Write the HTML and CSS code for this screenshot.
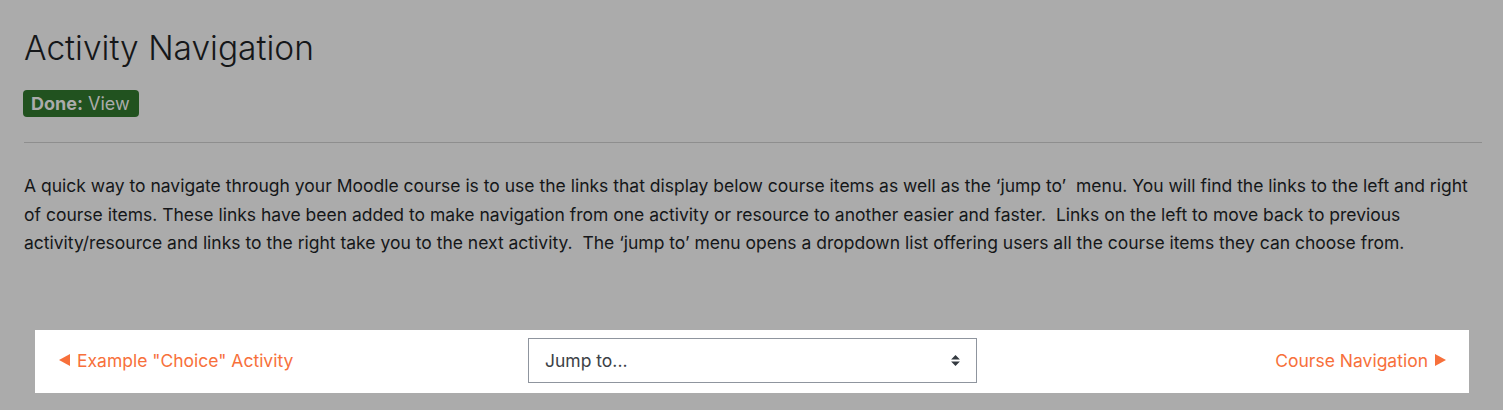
FILE: index.html
```html
<!DOCTYPE html>
<html>

<head>
  <meta charset="UTF-8">
  <title>Activity Navigation</title>
  <link rel="stylesheet" href="styles.css">
</head>

<body>
<div class="page">
  <h2 class="title">Activity Navigation</h2>
  <div class="completion">
    <span class="badge"><strong>Done:</strong> View</span>
  </div>
  <hr class="rule">
  <p class="intro">A quick way to navigate through your Moodle course is to use the links that display below course items as well as the &lsquo;jump to&rsquo;&nbsp; menu. You will find the links to the left and right<br>of course items. These links have been added to make navigation from one activity or resource to another easier and faster.&nbsp; Links on the left to move back to previous<br>activity/resource and links to the right take you to the next activity.&nbsp; The &lsquo;jump to&rsquo; menu opens a dropdown list offering users all the course items they can choose from.</p>

  <div class="activity-nav">
    <a class="prev" href="#">
      <svg class="arrow" width="11" height="12" viewBox="0 0 11 12"><path d="M0 6L11 0v12z"/></svg>
      Example "Choice" Activity
    </a>
    <div class="jump">
      <select class="jump-select">
        <option>Jump to...</option>
        <option>Example "Choice" Activity</option>
        <option>Course Navigation</option>
      </select>
    </div>
    <a class="next" href="#">
      Course Navigation
      <svg class="arrow" width="11" height="12" viewBox="0 0 11 12"><path d="M11 6L0 0v12z"/></svg>
    </a>
  </div>
</div>
</body>

</html>
```

FILE: styles.css
```css
body {
  margin: 0;
  background: #ababab;
  color: #151719;
  font-family: Inter, "Noto Sans", sans-serif;
}

.page {
  padding: 26px 21px 0 24px;
}

.title {
  margin: 0;
  font-size: 33.5px;
  font-weight: 300;
  line-height: 44px;
}

.completion {
  margin-top: 20px;
  height: 27px;
}
.badge {
  display: inline-block;
  height: 27px;
  line-height: 27px;
  margin-left: -1px;
  padding: 0 9px 0 8px;
  border-radius: 4px;
  background: #21521f;
  color: #ababab;
  font-size: 18px;
}
.badge strong {
  font-weight: 700;
}

.rule {
  margin: 25px 0 0 0;
  border: none;
  border-top: 1px solid #8e8e8e;
}

.intro {
  margin: 29px 0 0 0;
  font-size: 17.5px;
  line-height: 28.5px;
  white-space: nowrap;
}

.activity-nav {
  display: grid;
  grid-template-columns: 1fr 449px 1fr;
  align-items: center;
  margin: 72px 13px 0 11px;
  padding: 8px 23px 10px 24px;
  background: #fff;
}

.prev, .next {
  color: #f7703b;
  text-decoration: none;
  font-size: 17.5px;
  display: flex;
  align-items: center;
  gap: 7px;
}
.next {
  justify-content: flex-end;
}
.arrow {
  fill: #f7703b;
}

.jump-select {
  display: block;
  width: 449px;
  height: 45px;
  padding: 0 30px 0 16px;
  border: 1px solid #8f959e;
  border-radius: 0;
  background: #fff url("data:image/svg+xml,%3csvg xmlns='http://www.w3.org/2000/svg' viewBox='0 0 4 5'%3e%3cpath fill='%23343a40' d='M2 0L0 2h4zm0 5L0 3h4z'/%3e%3c/svg%3e") no-repeat right 16px center;
  background-size: 9px 11px;
  -webkit-appearance: none;
  appearance: none;
  color: #3c4146;
  font-family: Inter, "Noto Sans", sans-serif;
  font-size: 17.5px;
}
```
